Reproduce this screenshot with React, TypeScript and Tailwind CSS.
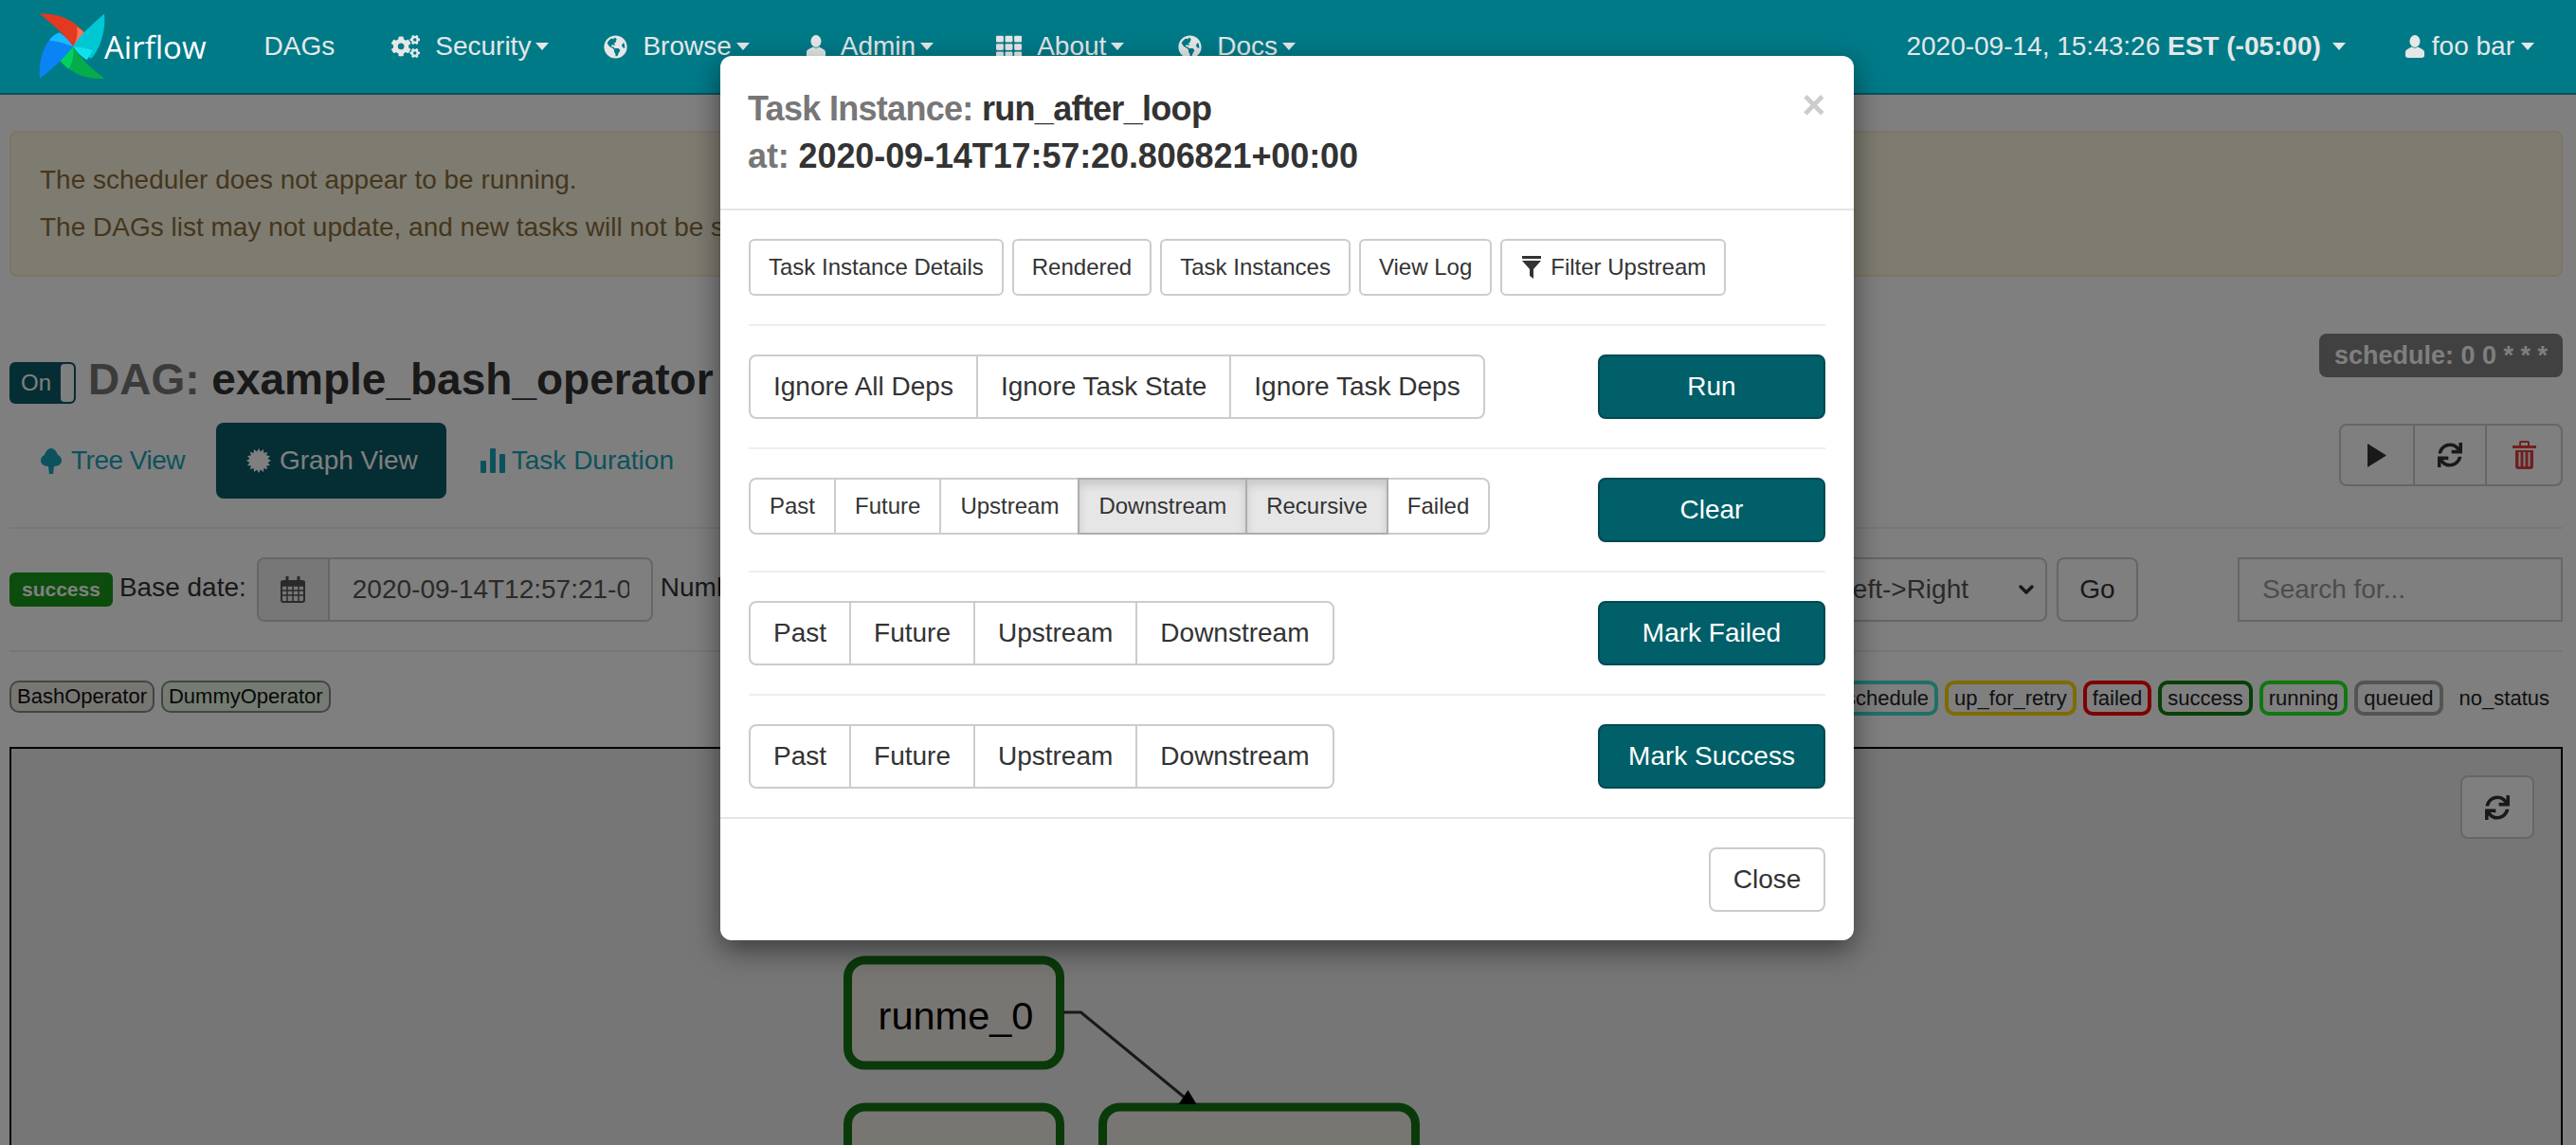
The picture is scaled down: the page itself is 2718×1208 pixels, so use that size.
import React from 'react';
import { FaCogs, FaGlobeAmericas, FaSync, FaTh } from 'react-icons/fa';
import { ChevronDown } from 'lucide-react';

const Caret: React.FC = () => (
  <span className="inline-block h-0 w-0 border-x-[7px] border-t-[8px] border-x-transparent border-t-[#e4e8e8]" />
);

const Logo: React.FC = () => (
  <svg viewBox="120 42 210 210" className="h-[70px] w-[70px] shrink-0">
    <path d="M123 44 C170 42 225 55 268 108 L228 148 C200 105 160 75 123 44Z" fill="#e43921" />
    <path d="M240 85 C252 92 262 100 268 108 C268 125 250 140 228 148 C240 130 245 105 240 85Z" fill="#ff7557" />
    <path d="M327 44 C332 90 318 150 285 186 L228 148 C250 110 290 75 327 44Z" fill="#00c7d4" />
    <path d="M228 148 C245 150 270 152 290 160 C285 170 280 178 272 190 C255 180 240 165 228 148Z" fill="#11e1ee" />
    <path d="M327 248 C280 252 225 240 183 186 L228 148 C255 190 290 220 327 248Z" fill="#04ac4a" />
    <path d="M228 148 C205 150 190 165 183 186 C192 200 205 212 215 218 C228 195 232 170 228 148Z" fill="#00d260" />
    <path d="M123 248 C118 200 132 140 170 108 L228 148 C200 185 160 220 123 248Z" fill="#0a84f5" />
    <path d="M228 148 C215 125 195 110 185 103 C172 108 160 118 153 128 C180 130 205 138 228 148Z" fill="#19bbff" />
  </svg>
);

const UserIcon: React.FC = () => (
  <svg viewBox="0 0 20 24" className="h-[24px] w-[20px]" fill="currentColor">
    <ellipse cx="10" cy="6.5" rx="5.5" ry="6.5" />
    <path d="M0 22 V18 C0 15 4 14.5 6.5 12.5 C8.5 14 11.5 14 13.5 12.5 C16 14.5 20 15 20 18 V22 C20 23.5 18 24 16 24 H4 C2 24 0 23.5 0 22Z" />
  </svg>
);

const NavItem: React.FC<{ icon: React.ReactNode; label: string; className: string }> = ({ icon, label, className }) => (
  <div className={`flex items-center ${className}`}>
    {icon}
    <span className="ml-[16px]">{label}</span>
    <span className="ml-[5px] flex"><Caret /></span>
  </div>
);

const Navbar: React.FC = () => (
  <header className="relative z-20 flex h-[100px] items-center border-b-2 border-[#0c5060] bg-[#017a88] pl-[41px] pr-[44px] text-[28px] text-[#e4e8e8]">
    <Logo />
    <span className="-ml-[1px] font-['Open_Sans',sans-serif] text-[33px] leading-none text-white">Airflow</span>
    <span className="ml-[61px]">DAGs</span>
    <NavItem className="ml-[60px]" icon={<FaCogs className="text-[30px]" />} label="Security" />
    <NavItem className="ml-[58px]" icon={<FaGlobeAmericas className="text-[25px]" />} label="Browse" />
    <NavItem className="ml-[60px]" icon={<UserIcon />} label="Admin" />
    <NavItem className="ml-[66px]" icon={<FaTh className="text-[27px]" />} label="About" />
    <NavItem className="ml-[57px]" icon={<FaGlobeAmericas className="text-[25px]" />} label="Docs" />
    <div className="ml-auto flex items-center">
      <span>
        2020-09-14, 15:43:26 <strong>EST (-05:00)</strong>
      </span>
      <span className="ml-[12px] flex"><Caret /></span>
      <span className="ml-[63px] flex"><UserIcon /></span>
      <span className="ml-[8px]">foo bar</span>
      <span className="ml-[7px] flex"><Caret /></span>
    </div>
  </header>
);

const TreeIcon: React.FC = () => (
  <svg viewBox="0 0 22 27" className="h-[27px] w-[22px]" fill="currentColor">
    <path d="M11 0 C15 0 17 4 18 7 C21 8 22 11 22 13 C22 16 19 19 14 19 L13 27 H9 L8 19 C3 19 0 16 0 13 C0 11 1 8 4 7 C5 4 7 0 11 0Z" />
  </svg>
);

const StarBurst: React.FC = () => {
  const points = Array.from({ length: 32 }, (_, i) => {
    const r = i % 2 === 0 ? 12 : 9;
    const a = (i * Math.PI) / 16;
    return `${12 + r * Math.cos(a)},${12 + r * Math.sin(a)}`;
  }).join(' ');
  return (
    <svg viewBox="0 0 24 24" className="h-[26px] w-[26px]">
      <polygon points={points} fill="currentColor" />
    </svg>
  );
};

const StatsIcon: React.FC = () => (
  <svg viewBox="0 0 26 26" className="h-[26px] w-[26px]" fill="currentColor">
    <rect x="0" y="13" width="6" height="13" rx="1" />
    <rect x="10" y="0" width="6" height="26" rx="1" />
    <rect x="20" y="6" width="6" height="20" rx="1" />
  </svg>
);

const CalendarIcon: React.FC = () => (
  <svg viewBox="0 0 26 28" className="h-[28px] w-[26px] text-[#555555]" fill="none" stroke="currentColor" strokeWidth="1.5">
    <rect x="1" y="5" width="24" height="22" rx="2" strokeWidth="2" />
    <path d="M1 6 H25 V10 H1Z" fill="currentColor" />
    <path d="M7 0 V6 M19 0 V6" strokeWidth="3" />
    <path d="M1 15 H25 M1 20 H25 M7 10 V27 M13 10 V27 M19 10 V27" />
  </svg>
);

const TrashIcon: React.FC = () => (
  <svg viewBox="0 0 25 30" className="h-[30px] w-[25px] text-[#e04040]" fill="currentColor">
    <path d="M8 5 V2 Q8 1 9 1 H16 Q17 1 17 2 V5" fill="none" stroke="currentColor" strokeWidth="2" />
    <rect x="0" y="5" width="25" height="3" />
    <path d="M3 10 H22 V27 Q22 30 19 30 H6 Q3 30 3 27Z" />
    <rect x="6.5" y="12" width="2" height="15" fill="#ffffff" />
    <rect x="11.5" y="12" width="2" height="15" fill="#ffffff" />
    <rect x="16.5" y="12" width="2" height="15" fill="#ffffff" />
  </svg>
);

const Tabs: React.FC = () => (
  <div className="mt-[16px] flex h-[80px] items-center text-[28px] text-[#18a5b8]">
    <div className="flex items-center pl-[33px]">
      <TreeIcon />
      <span className="ml-[10px] tracking-[-0.5px]">Tree View</span>
    </div>
    <div className="ml-[33px] flex h-full items-center rounded-[8px] bg-[#0a5a68] pl-[32px] pr-[30px] text-white">
      <StarBurst />
      <span className="ml-[9px]">Graph View</span>
    </div>
    <div className="ml-[36px] flex items-center">
      <StatsIcon />
      <span className="ml-[7px]">Task Duration</span>
    </div>
  </div>
);

const ActionButtons: React.FC = () => (
  <div className="flex h-[66px] rounded-[8px] border-2 border-[#cccccc] text-[#333333]">
    <div className="flex w-[76px] items-center justify-center">
      <svg viewBox="0 0 20 25" className="h-[25px] w-[20px]" fill="currentColor">
        <polygon points="0,0 20,12.5 0,25" />
      </svg>
    </div>
    <div className="flex w-[78px] items-center justify-center border-x-2 border-[#cccccc]"><FaSync className="text-[26px]" /></div>
    <div className="flex w-[78px] items-center justify-center"><TrashIcon /></div>
  </div>
);

const Legend: React.FC<{ label: string; border: string }> = ({ label, border }) => (
  <span className={`rounded-[10px] border-[4px] bg-white px-[6px] text-[22px] leading-[29px] text-[#222222] ${border}`}>
    {label}
  </span>
);

const FilterBar: React.FC = () => (
  <div className="mt-[30px] flex h-[68px] items-center justify-between text-[28px] text-[#333333]">
    <div className="flex items-center">
      <span className="rounded-[6px] bg-[#189818] px-[13px] text-[21px] font-bold leading-[36px] text-white">success</span>
      <span className="ml-[7px] -mt-[4px]">Base date:</span>
      <div className="ml-[11px] flex h-[68px] w-[418px] overflow-hidden rounded-[8px] border-2 border-[#cccccc]">
        <div className="flex w-[75px] items-center justify-center border-r-2 border-[#cccccc] bg-[#eeeeee]">
          <CalendarIcon />
        </div>
        <div className="flex w-[316px] items-center overflow-hidden whitespace-nowrap pl-[24px] text-[#555555]">2020-09-14T12:57:21-05:00</div>
      </div>
      <span className="ml-[8px] -mt-[4px]">Number of runs:</span>
    </div>
    <div className="flex items-center">
      <div className="flex h-[68px] w-[360px] items-center justify-end rounded-[8px] border-2 border-[#cccccc] pr-[8px] text-[#555555]">
        Left-&gt;Right
        <ChevronDown className="ml-[49px] h-[24px] w-[24px] text-[#333333]" strokeWidth={3.5} />
      </div>
      <button className="ml-[10px] h-[68px] w-[86px] rounded-[8px] border-2 border-[#cccccc] bg-white">Go</button>
      <input
        readOnly
        placeholder="Search for..."
        className="ml-[105px] h-[68px] w-[343px] border-2 border-[#cccccc] pl-[24px] text-[28px] outline-none placeholder:text-[#999999]"
      />
    </div>
  </div>
);

const LegendRow: React.FC = () => (
  <div className="mt-[30px] flex h-[38px] items-start justify-between">
    <div className="flex gap-[7px]">
      <span className="rounded-[10px] border-2 border-[#888888] bg-[#f0ede4] px-[6px] text-[22px] leading-[30px] text-[#111111]">BashOperator</span>
      <span className="rounded-[10px] border-2 border-[#888888] bg-[#e8f7e4] px-[6px] text-[22px] leading-[30px] text-[#111111]">DummyOperator</span>
    </div>
    <div className="flex gap-[7px] pr-[4px]">
      <Legend label="up_for_reschedule" border="border-[#40e0d0]" />
      <Legend label="up_for_retry" border="border-[#ffd700]" />
      <Legend label="failed" border="border-[#ff0000]" />
      <Legend label="success" border="border-[#108010]" />
      <Legend label="running" border="border-[#20f020]" />
      <Legend label="queued" border="border-[#a8a8a8]" />
      <Legend label="no_status" border="border-white" />
    </div>
  </div>
);

const GraphBox: React.FC = () => (
  <div className="relative mt-[32px] h-[500px] border-2 border-black bg-[#ececec]">
    <svg viewBox="12 790 2689 418" className="block h-[418px] w-full">
      <rect x="894" y="1013" width="224" height="111" rx="18" fill="#f0ede4" stroke="#147414" strokeWidth="9" />
      <text x="1008" y="1086" textAnchor="middle" fontSize="41.5" fill="#000000">runme_0</text>
      <rect x="894" y="1168" width="224" height="111" rx="18" fill="#f0ede4" stroke="#147414" strokeWidth="9" />
      <rect x="1163" y="1168" width="330" height="111" rx="18" fill="#f0ede4" stroke="#147414" strokeWidth="9" />
      <path d="M1122 1068 L1140 1068 L1252 1160" fill="none" stroke="#333333" strokeWidth="3" />
      <polygon points="1253,1150 1262,1165 1243,1165" fill="#000000" />
    </svg>
    <div className="absolute right-[28px] top-[28px] flex h-[67px] w-[78px] items-center justify-center rounded-[8px] border-2 border-[#cccccc] bg-white text-[#333333]">
      <FaSync className="text-[26px]" />
    </div>
  </div>
);

const Page: React.FC = () => (
  <main className="pl-[10px] pr-[14px] pt-[38px]">
    <div className="flex h-[154px] flex-col justify-center rounded-[8px] border-2 border-[#faebcc] bg-[#fcf8e3] pl-[30px] text-[28px] leading-[50px] text-[#8a6d3b]">
      <p>The scheduler does not appear to be running.</p>
      <p>The DAGs list may not update, and new tasks will not be scheduled.</p>
    </div>

    <div className="mt-[60px] flex h-[78px] items-start justify-between">
      <div className="flex items-start">
        <div className="mt-[30px] flex h-[44px] w-[70px] items-center justify-between overflow-hidden rounded-[6px] border-2 border-[#0a5a68] bg-[#0a5a68] pl-[10px] text-[24px] text-white">
          On
          <span className="h-full w-[14px] rounded-[4px] bg-white" />
        </div>
        <h1 className="ml-[13px] mt-[18px] whitespace-nowrap text-[46px] font-bold leading-[60px] text-[#777777]">
          DAG: <span className="text-[#333333]">example_bash_operator</span>
        </h1>
      </div>
      <span className="rounded-[8px] bg-[#828282] px-[16px] text-[27px] font-bold leading-[46px] text-white">schedule: 0 0 * * *</span>
    </div>

    <div className="flex items-start justify-between">
      <Tabs />
      <div className="mt-[17px]"><ActionButtons /></div>
    </div>
    <div className="mt-[30px] h-[2px] bg-[#eeeeee]" />

    <FilterBar />
    <div className="mt-[30px] h-[2px] bg-[#eeeeee]" />

    <LegendRow />
    <GraphBox />
  </main>
);

const SmallButton: React.FC<{ children: React.ReactNode }> = ({ children }) => (
  <button className="flex h-[60px] items-center rounded-[6px] border-2 border-[#cccccc] bg-white px-[19px] text-[24px] text-[#333333]">
    {children}
  </button>
);

const ButtonGroup: React.FC<{ items: string[]; small?: boolean; active?: string[] }> = ({ items, small, active = [] }) => (
  <div className="flex">
    {items.map((item, i) => {
      const on = active.includes(item);
      return (
        <button
          key={item}
          className={`border-2 text-[#333333] ${small ? 'h-[60px] px-[20px] text-[24px]' : 'h-[68px] px-[24px] text-[28px]'} ${
            on ? 'z-10 border-[#adadad] bg-[#e6e6e6] shadow-[inset_0_6px_10px_rgba(0,0,0,0.125)]' : 'border-[#cccccc] bg-white'
          } ${i > 0 ? '-ml-[2px]' : 'rounded-l-[8px]'} ${i === items.length - 1 ? 'rounded-r-[8px]' : ''}`}
        >
          {item}
        </button>
      );
    })}
  </div>
);

const ActionRow: React.FC<{ group: React.ReactNode; label: string }> = ({ group, label }) => (
  <>
    <div className="my-[30px] h-[2px] bg-[#eeeeee]" />
    <div className="flex items-start justify-between">
      {group}
      <button className="h-[68px] w-[240px] rounded-[8px] border-2 border-[#004a52] bg-[#005f69] text-[28px] text-white">{label}</button>
    </div>
  </>
);

const TaskModal: React.FC = () => (
  <div className="absolute left-[760px] top-[59px] z-30 h-[933px] w-[1196px] rounded-[12px] bg-white shadow-[0_10px_30px_rgba(0,0,0,0.5)]">
    <div className="flex h-[163px] items-start justify-between border-b-2 border-[#e5e5e5] pb-[30px] pl-[29px] pr-[30px] pt-[31px]">
      <div className="text-[36px] font-bold leading-[50px] text-[#333333]">
        <div className="tracking-[-0.7px]"><span className="text-[#777777]">Task Instance:</span> run_after_loop</div>
        <div className="tracking-[-0.1px]"><span className="text-[#777777]">at:</span> 2020-09-14T17:57:20.806821+00:00</div>
      </div>
      <span className="pt-[3px] text-[42px] font-bold leading-[36px] text-[#cccccc]">×</span>
    </div>

    <div className="px-[30px] pb-[30px] pt-[30px]">
      <div className="flex gap-[9px]">
        <SmallButton>Task Instance Details</SmallButton>
        <SmallButton>Rendered</SmallButton>
        <SmallButton>Task Instances</SmallButton>
        <SmallButton>View Log</SmallButton>
        <SmallButton>
          <svg viewBox="0 0 20 24" className="ml-[2px] mr-[10px] h-[24px] w-[20px]" fill="#333333">
            <rect x="0" y="0" width="20" height="3" />
            <path d="M0 5 H20 L12 14 V24 L8 21 V14 Z" />
          </svg>
          Filter Upstream
        </SmallButton>
      </div>
      <ActionRow group={<ButtonGroup items={['Ignore All Deps', 'Ignore Task State', 'Ignore Task Deps']} />} label="Run" />
      <ActionRow
        group={<ButtonGroup small items={['Past', 'Future', 'Upstream', 'Downstream', 'Recursive', 'Failed']} active={['Downstream', 'Recursive']} />}
        label="Clear"
      />
      <ActionRow group={<ButtonGroup items={['Past', 'Future', 'Upstream', 'Downstream']} />} label="Mark Failed" />
      <ActionRow group={<ButtonGroup items={['Past', 'Future', 'Upstream', 'Downstream']} />} label="Mark Success" />
    </div>

    <div className="flex justify-end border-t-2 border-[#e5e5e5] px-[30px] pt-[30px]">
      <button className="h-[68px] w-[123px] rounded-[8px] border-2 border-[#cccccc] bg-white text-[28px] text-[#333333]">Close</button>
    </div>
  </div>
);

const App: React.FC = () => (
  <div className="relative h-[1208px] w-[2718px] overflow-hidden bg-white font-['Liberation_Sans',Arial,sans-serif]">
    <Navbar />
    <Page />
    <div className="absolute inset-0 z-10 bg-black/50" />
    <TaskModal />
  </div>
);

export default App;
